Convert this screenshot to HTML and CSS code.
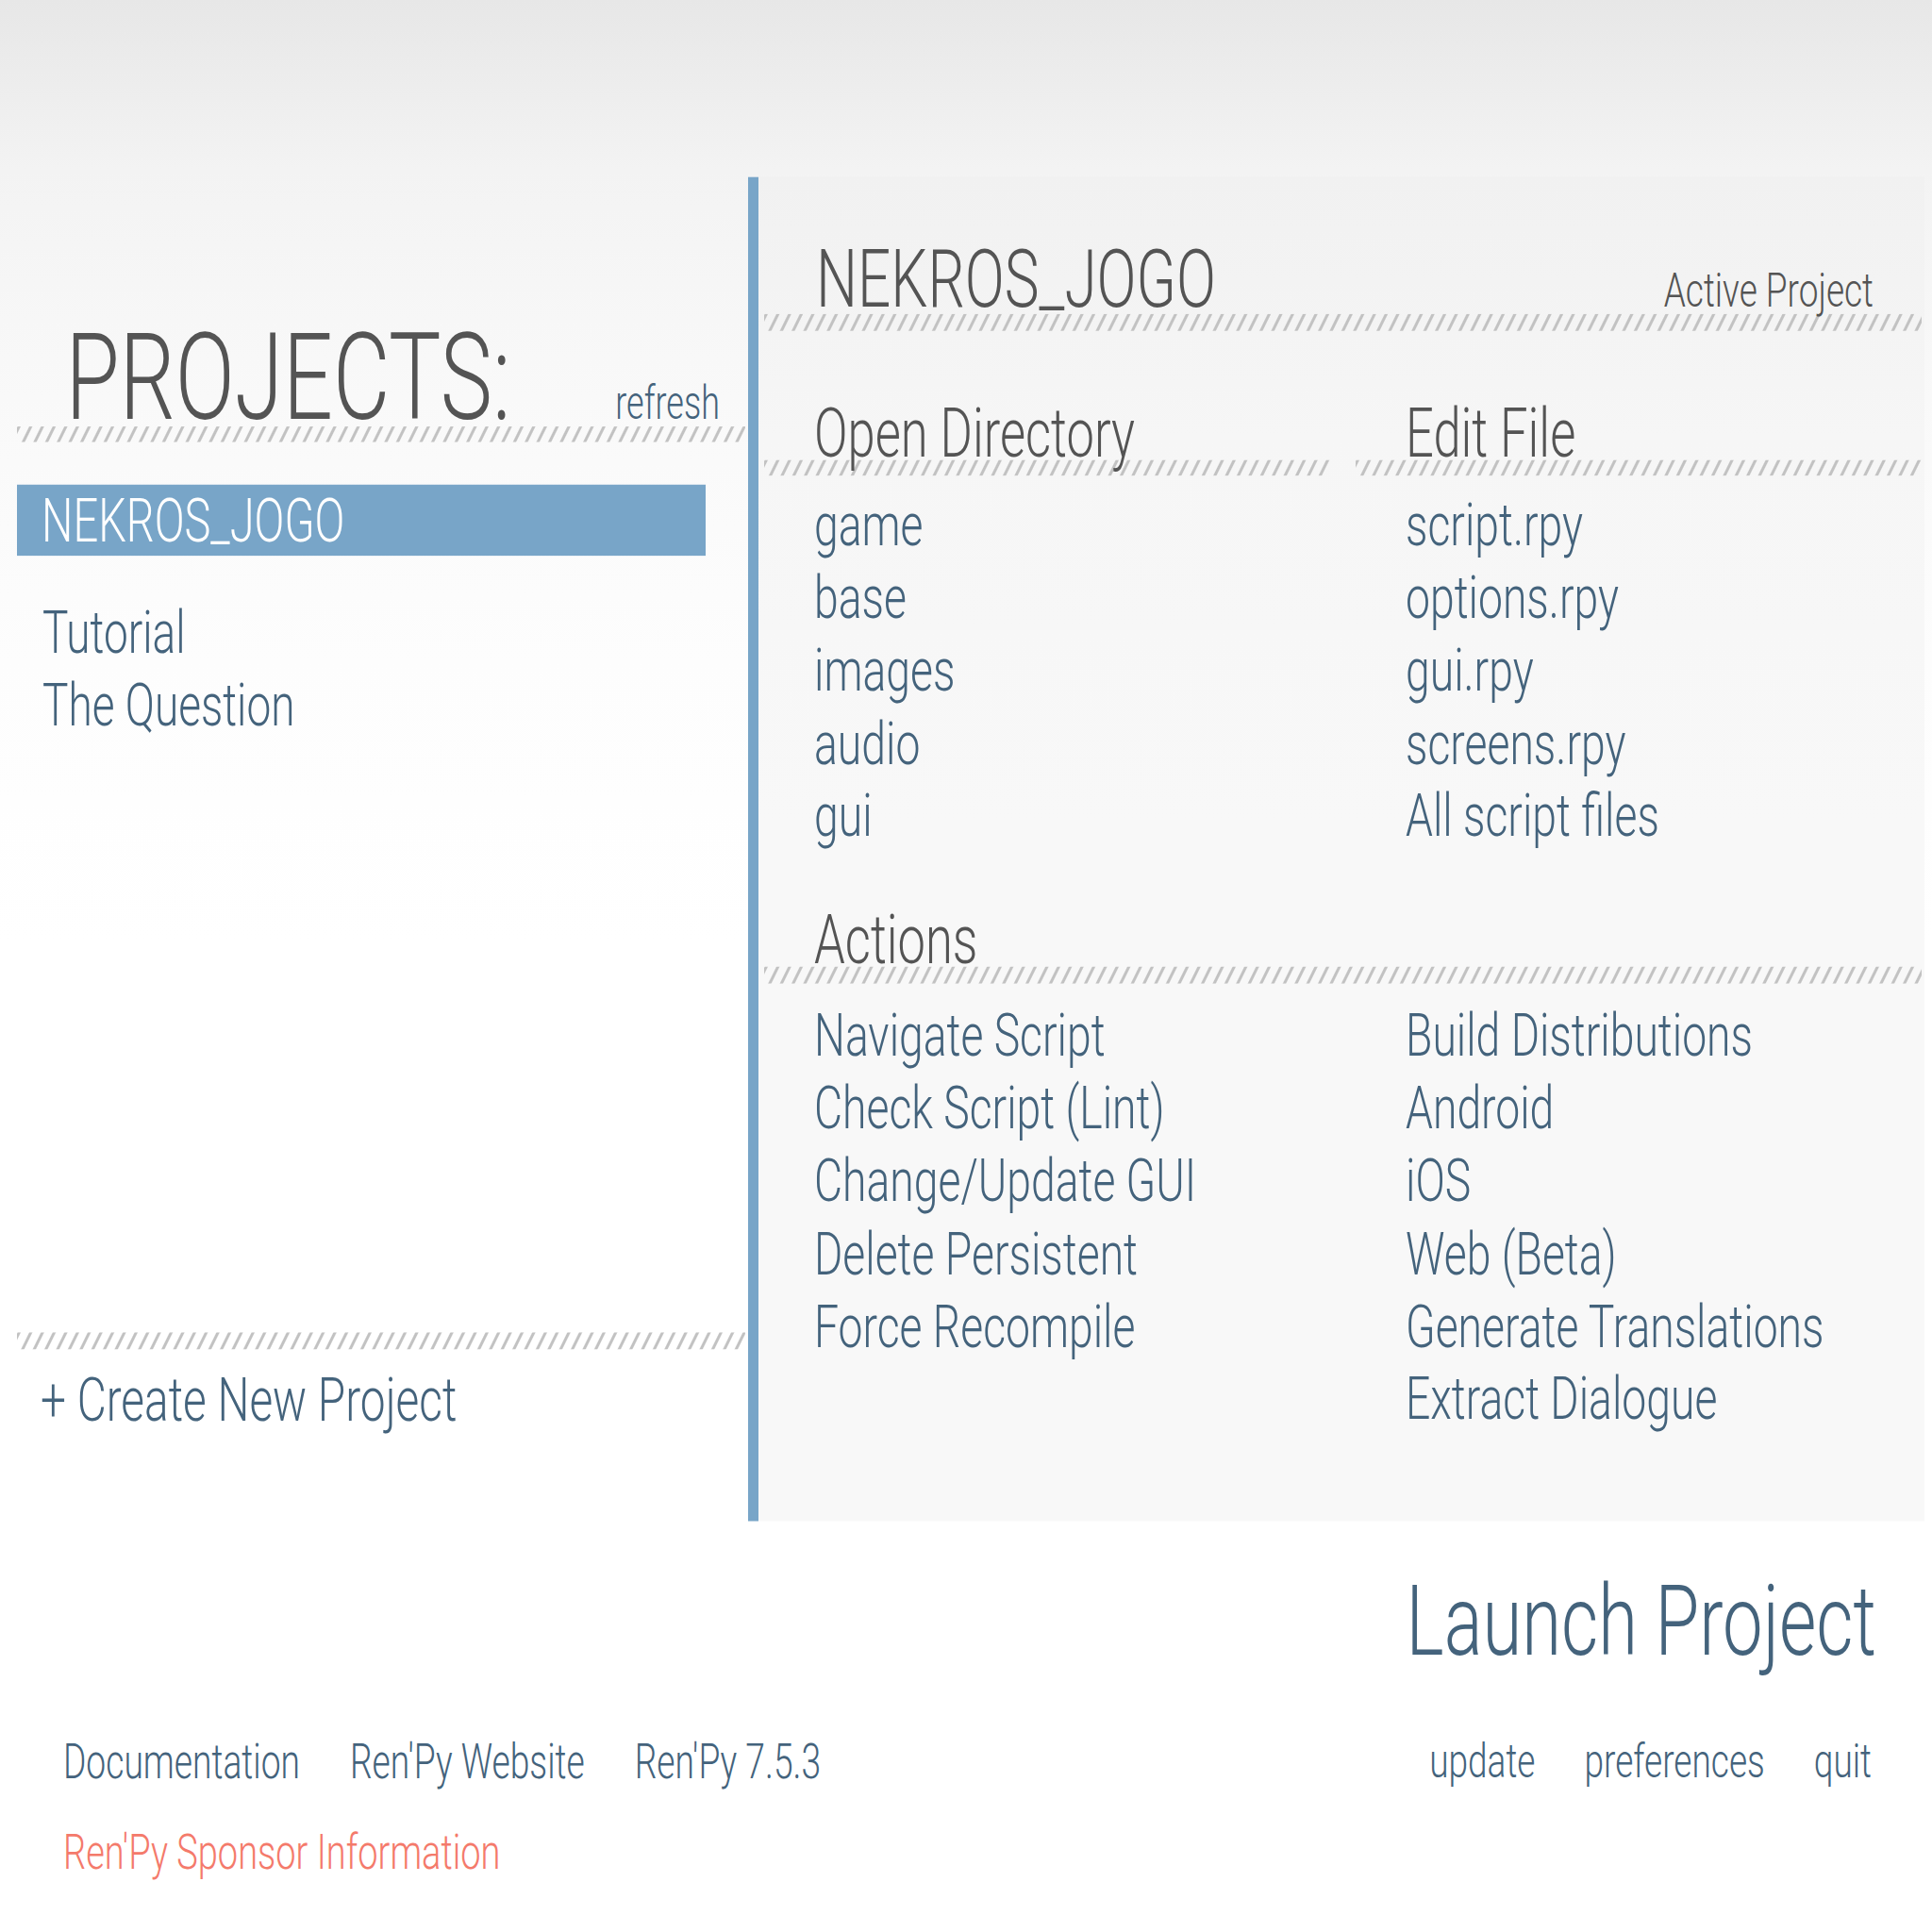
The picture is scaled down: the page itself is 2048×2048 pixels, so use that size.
FILE: index.html
```html
<!DOCTYPE html>
<html lang="en">
<head>
<meta charset="utf-8">
<title>Ren'Py Launcher</title>
<link rel="stylesheet" href="styles.css">
</head>
<body>
<div class="screen">
  <div class="main">
    <section class="projects">
      <div class="proj-head">
        <h1 class="proj-title">PROJECTS:</h1>
        <span class="link refresh">refresh</span>
      </div>
      <div class="stripe"></div>
      <div class="proj-selected">NEKROS_JOGO</div>
      <ul class="proj-list">
        <li class="link">Tutorial</li>
        <li class="link">The Question</li>
      </ul>
      <div class="stripe stripe-bottom"></div>
      <div class="link create">+ Create New Project</div>
    </section>

    <section class="panel">
      <div class="panel-head">
        <h2 class="panel-title">NEKROS_JOGO</h2>
        <span class="panel-sub">Active Project</span>
      </div>
      <div class="stripe"></div>

      <div class="cols">
        <div class="col">
          <h3 class="sec-title">Open Directory</h3>
          <div class="stripe"></div>
          <ul class="links">
            <li class="link">game</li>
            <li class="link">base</li>
            <li class="link">images</li>
            <li class="link">audio</li>
            <li class="link">gui</li>
          </ul>
        </div>
        <div class="col">
          <h3 class="sec-title">Edit File</h3>
          <div class="stripe"></div>
          <ul class="links">
            <li class="link">script.rpy</li>
            <li class="link">options.rpy</li>
            <li class="link">gui.rpy</li>
            <li class="link">screens.rpy</li>
            <li class="link">All script files</li>
          </ul>
        </div>
      </div>

      <h3 class="sec-title actions-title">Actions</h3>
      <div class="stripe"></div>
      <div class="cols">
        <ul class="links actions-list">
          <li class="link">Navigate Script</li>
          <li class="link">Check Script (Lint)</li>
          <li class="link">Change/Update GUI</li>
          <li class="link">Delete Persistent</li>
          <li class="link">Force Recompile</li>
        </ul>
        <ul class="links actions-list">
          <li class="link">Build Distributions</li>
          <li class="link">Android</li>
          <li class="link">iOS</li>
          <li class="link">Web (Beta)</li>
          <li class="link">Generate Translations</li>
          <li class="link">Extract Dialogue</li>
        </ul>
      </div>
    </section>
  </div>

  <div class="launch"><span class="link">Launch Project</span></div>

  <footer class="footer">
    <div class="footer-left">
      <div class="footer-row">
        <span class="link">Documentation</span>
        <span class="link">Ren'Py Website</span>
        <span class="link">Ren'Py 7.5.3</span>
      </div>
      <div class="footer-row">
        <span class="sponsor">Ren'Py Sponsor Information</span>
      </div>
    </div>
    <div class="footer-right">
      <span class="link">update</span>
      <span class="link">preferences</span>
      <span class="link">quit</span>
    </div>
  </footer>
</div>
</body>
</html>
```

FILE: styles.css
```css
html, body {
  margin: 0;
  padding: 0;
}

body {
  width: 2048px;
  height: 2048px;
  overflow: hidden;
  background: linear-gradient(180deg, #e7e7e7 0px, #f3f3f3 180px, #f9f9f9 420px, #fdfdfd 700px, #ffffff 1000px);
  font-family: Roboto, "Noto Sans", "Liberation Sans", sans-serif;
  font-weight: 300;
  color: #545454;
}

/* The launcher is drawn in its own coordinates and stretched vertically */
.screen {
  width: 2048px;
  height: 1495px;
  transform: scaleY(1.37);
  transform-origin: 0 0;
}

.link {
  color: #44637c;
}

.main {
  display: grid;
  grid-template-columns: 772px 1247px;
  column-gap: 3px;
  padding: 136.5px 0 0 18px;
  height: 1040.5px;
}

.stripe {
  height: 12.6px;
  background-image: repeating-linear-gradient(124deg,
    rgba(196, 196, 196, 0) 0px,
    #c2c2c2 1.0px,
    #c2c2c2 2.8px,
    rgba(196, 196, 196, 0) 3.8px,
    rgba(196, 196, 196, 0) 10.28px);
}

/* Left column */
.projects {
  display: flex;
  flex-direction: column;
}

.proj-head {
  display: flex;
  justify-content: space-between;
  align-items: baseline;
  margin-top: 120.4px;
  padding: 0 27px 0 51.5px;
}

.proj-title {
  margin: 0;
  font-size: 93px;
  line-height: 72px;
  font-weight: 300;
  color: #545454;
}

.refresh {
  font-size: 36px;
  line-height: 35px;
}

.proj-selected {
  margin-top: 32.1px;
  width: 730px;
  height: 55.5px;
  box-sizing: border-box;
  padding-left: 26px;
  background: #78a5c8;
  color: #ffffff;
  font-size: 47px;
  line-height: 55.5px;
}

.proj-list {
  list-style: none;
  margin: 32.3px 0 0;
  padding: 0 0 0 27px;
  font-size: 46px;
  line-height: 55.5px;
}

.stripe-bottom {
  margin-top: auto;
}

.create {
  margin: 11.9px 0 66px;
  padding-left: 25px;
  font-size: 47.8px;
  line-height: 55.5px;
}

/* Right panel */
.panel {
  border-left: 11px solid #78a5c8;
  background: linear-gradient(180deg, #f1f1f1 0px, #f6f6f6 200px, #f8f8f8 500px, #f8f8f8 100%);
  padding: 0 3px 0 6px;
}

.panel-head {
  display: flex;
  justify-content: space-between;
  align-items: baseline;
  margin-top: 51.1px;
  padding: 0 51px 0 55px;
}

.panel-title {
  margin: 0;
  font-size: 62px;
  line-height: 55.4px;
  font-weight: 300;
  color: #545454;
}

.panel-sub {
  font-size: 37px;
  line-height: 36px;
  color: #545454;
}

.cols {
  display: grid;
  grid-template-columns: 600px 600px;
  column-gap: 27px;
}

.sec-title {
  margin: 58px 0 0;
  padding-left: 53px;
  font-size: 52.5px;
  line-height: 42px;
  font-weight: 300;
  color: #545454;
}

.actions-title {
  margin-top: 47.1px;
}

.links {
  list-style: none;
  margin: 9.9px 0 0;
  padding: 0 0 0 53px;
  font-size: 46.3px;
  line-height: 56.2px;
}

.actions-list {
  margin-top: 12.2px;
}

/* Bottom */
.launch {
  margin-top: 39.3px;
  padding-right: 59px;
  text-align: right;
  font-size: 76px;
  line-height: 76px;
}

.footer {
  display: flex;
  justify-content: space-between;
  align-items: flex-start;
  margin-top: 49.1px;
  padding: 0 64px 0 67px;
  font-size: 37.2px;
  line-height: 44px;
}

.footer-left {
  display: flex;
  flex-direction: column;
  gap: 26px;
}

.footer-row {
  display: flex;
  gap: 53px;
}

.footer-right {
  display: flex;
  gap: 52px;
  font-size: 37px;
}

.sponsor {
  color: #f47a6b;
  font-size: 38px;
}
```
